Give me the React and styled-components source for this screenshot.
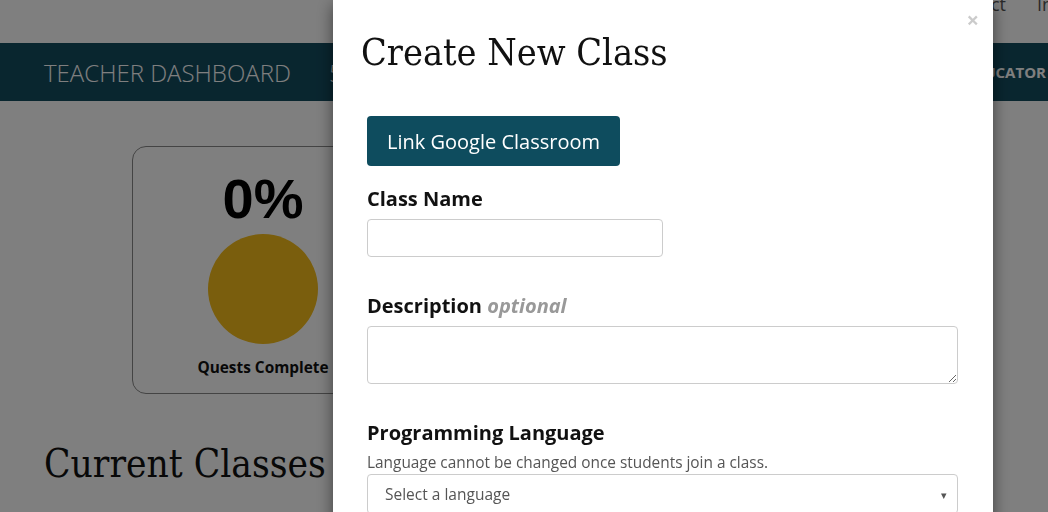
import React from 'react'
import styled, { createGlobalStyle } from 'styled-components'

const GlobalStyle = createGlobalStyle`
  html, body {
    margin: 0;
    padding: 0;
    overflow: hidden;
    background: #fff;
    font-family: "Open Sans", "Liberation Sans", sans-serif;
  }
`

const SLAB = '"DejaVu Serif Condensed", "DejaVu Serif", serif'

const App = () => {
  return (
    <>
      <GlobalStyle />
      <Page>
        <TopLinks>
          <TopLink>About</TopLink>
          <TopLink>Contact</TopLink>
          <LastLink>Info</LastLink>
        </TopLinks>
        <NavBar>
          <NavTitle>TEACHER DASHBOARD</NavTitle>
          <NavItem>5 CLASSES</NavItem>
          <NavRight>EDUCATOR</NavRight>
        </NavBar>
        <Main>
          <StatCard>
            <Percent>0%</Percent>
            <Dot />
            <StatLabel>Quests Complete</StatLabel>
          </StatCard>
          <SectionTitle>Current Classes</SectionTitle>
        </Main>
      </Page>

      <Backdrop />
      <Modal>
        <Close>×</Close>
        <ModalTitle>Create New Class</ModalTitle>
        <PrimaryButton>Link Google Classroom</PrimaryButton>

        <Group>
          <Label>Class Name</Label>
          <TextInput type="text" />
        </Group>

        <Group>
          <Label>
            Description <Optional>optional</Optional>
          </Label>
          <TextArea />
        </Group>

        <Group>
          <Label>Programming Language</Label>
          <Help>Language cannot be changed once students join a class.</Help>
          <SelectBox>
            <span>Select a language</span>
            <Caret>▾</Caret>
          </SelectBox>
        </Group>
      </Modal>
    </>
  )
}

export default App

const Page = styled.div`
  width: 1048px;
  height: 512px;
  overflow: hidden;
`

const TopLinks = styled.div`
  height: 43px;
  display: flex;
  justify-content: flex-end;
  align-items: flex-start;
  gap: 31px;
  margin-right: -39px;
`

const TopLink = styled.span`
  font-size: 18px;
  line-height: 18px;
  margin-top: -5px;
  color: #555;
  white-space: nowrap;
`

const LastLink = styled(TopLink)`
  width: 50px;
`

const NavBar = styled.div`
  height: 58px;
  background: #134c5f;
  display: flex;
  align-items: center;
  padding: 0 2px 0 44px;
`

const NavTitle = styled.span`
  font-size: 24px;
  font-weight: 300;
  color: #fff;
`

const NavItem = styled.span`
  font-size: 24px;
  font-weight: 300;
  color: #fff;
  margin-left: 38px;
`

const NavRight = styled.span`
  margin-left: auto;
  font-size: 15px;
  font-weight: 700;
  color: #fff;
`

const Main = styled.div`
  padding: 45px 44px 0;
`

const StatCard = styled.div`
  margin-left: 88px;
  width: 262px;
  height: 248px;
  box-sizing: border-box;
  border: 1px solid #888;
  border-radius: 14px;
  display: flex;
  flex-direction: column;
  align-items: center;
`

const Percent = styled.div`
  font-family: "Liberation Sans", Arial, sans-serif;
  font-weight: 700;
  font-size: 56px;
  line-height: 60px;
  margin-top: 22px;
  color: #000;
`

const Dot = styled.div`
  width: 110px;
  height: 110px;
  border-radius: 50%;
  background: #f4bc1a;
  margin-top: 5px;
`

const StatLabel = styled.div`
  font-size: 15.4px;
  font-weight: 700;
  color: #111;
  margin-top: 13px;
`

const SectionTitle = styled.h2`
  font-family: ${SLAB};
  font-weight: 400;
  font-size: 38.5px;
  line-height: 40px;
  margin: 50px 0 0;
  color: #111;
`

const Backdrop = styled.div`
  position: fixed;
  inset: 0;
  background: rgba(0, 0, 0, 0.5);
`

const Modal = styled.div`
  position: fixed;
  top: 0;
  left: 333px;
  width: 660px;
  height: 620px;
  box-sizing: border-box;
  background: #fff;
  padding: 30px 34px 0;
  box-shadow: 0 5px 15px rgba(0, 0, 0, 0.5);
`

const Close = styled.span`
  position: absolute;
  top: 8px;
  right: 14px;
  font-size: 22px;
  font-weight: 700;
  color: #000;
  opacity: 0.2;
  line-height: 22px;
`

const ModalTitle = styled.h1`
  font-family: ${SLAB};
  font-weight: 400;
  font-size: 37.5px;
  line-height: 44px;
  margin: 0 0 42px -6px;
  color: #111;
`

const PrimaryButton = styled.button`
  display: block;
  height: 50px;
  padding: 0 20px;
  border: none;
  border-radius: 4px;
  background: #0e4c5e;
  color: #fff;
  font-family: "Open Sans", sans-serif;
  font-size: 20px;
  margin-bottom: 21px;
`

const Group = styled.div`
  margin-bottom: 37px;
`

const Label = styled.div`
  font-size: 20px;
  font-weight: 700;
  line-height: 24px;
  color: #111;
  margin-bottom: 8px;
`

const Optional = styled.em`
  color: #999;
  font-weight: 700;
`

const fieldBase = `
  display: block;
  box-sizing: border-box;
  border: 1px solid #ccc;
  border-radius: 4px;
  background: #fff;
  font-family: "Open Sans", sans-serif;
`

const TextInput = styled.input`
  ${fieldBase}
  width: 296px;
  height: 38px;
`

const TextArea = styled.textarea`
  ${fieldBase}
  width: 591px;
  height: 58px;
  resize: vertical;
`

const Help = styled.div`
  font-size: 15.4px;
  line-height: 20px;
  color: #555;
  margin: 3px 0 1px;
`

const SelectBox = styled.div`
  ${fieldBase}
  width: 591px;
  height: 40px;
  display: flex;
  align-items: center;
  justify-content: space-between;
  padding: 0 10px 0 17px;
  font-size: 15.5px;
  color: #555;
`

const Caret = styled.span`
  font-size: 11px;
  color: #555;
`
